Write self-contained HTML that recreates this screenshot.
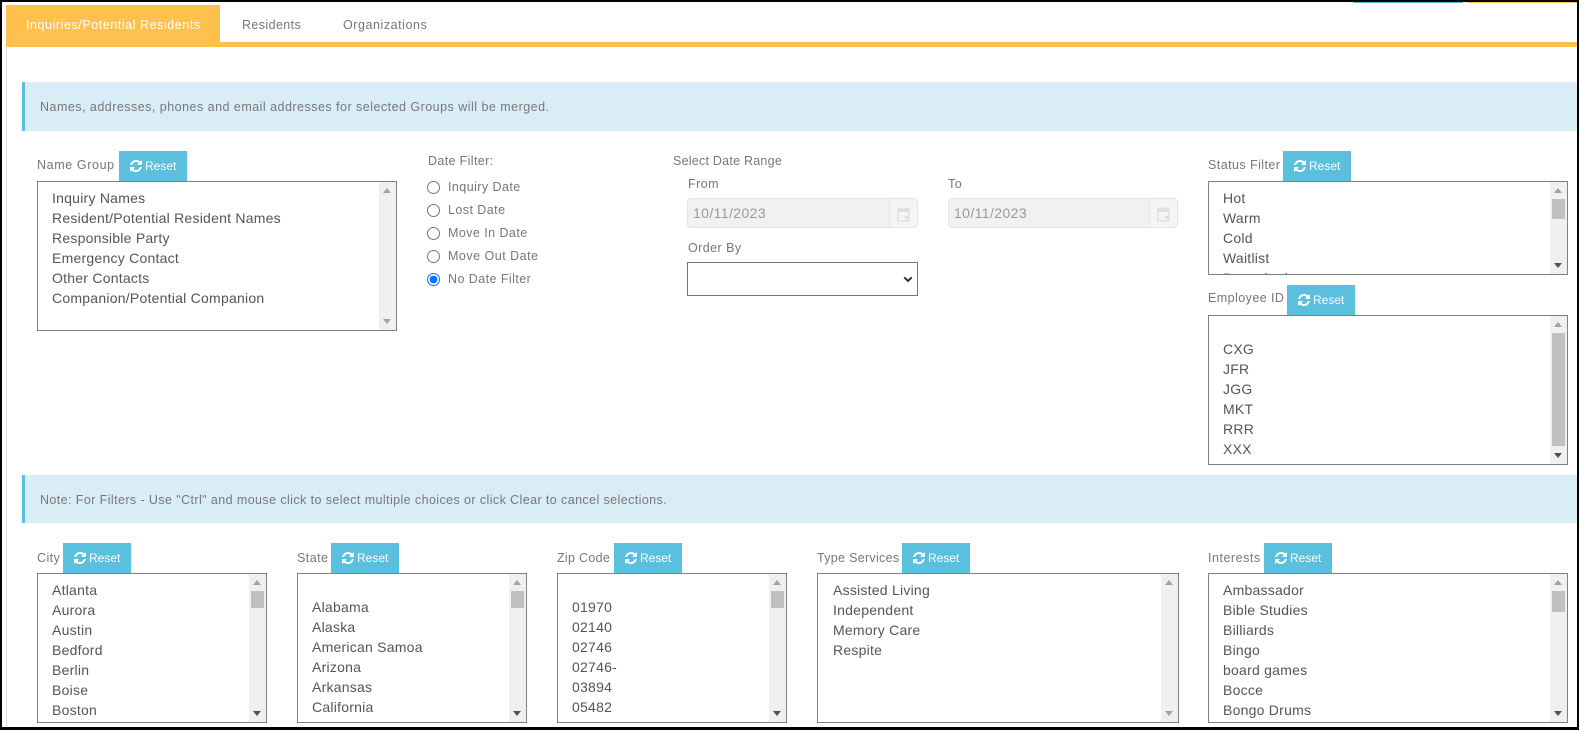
<!DOCTYPE html>
<html lang="en">
<head>
<meta charset="utf-8">
<title>Merge Filters</title>
<style>
html,body{margin:0;padding:0;background:#fff}
body{position:relative;width:1579px;height:730px;overflow:hidden;font-family:"Liberation Sans",Arial,sans-serif;color:#777}
.a{position:absolute;white-space:nowrap}
.k{position:absolute;background:#000}
.t{font-size:12.5px;line-height:16px;letter-spacing:.44px}
.alert{position:absolute;left:22px;width:1555px;box-sizing:border-box;background:#d9edf7;border-left:3px solid #5bc0de;font-size:12.5px;color:#777;padding-left:15px}
.btn{position:absolute;width:68px;height:30px;background:#5bc0de;color:#fff;font-size:12px}
.btn svg{position:absolute;left:10px;top:8px;width:14px;height:14px;fill:#fff}
.btn span{position:absolute;left:26px;top:7px;line-height:16px}
.box{position:absolute;box-sizing:border-box;border:1px solid #808080;background:#fff;overflow:hidden;font-size:14px;letter-spacing:.24px;color:#555;line-height:20px}
.box .l{position:absolute;left:14px;top:6px;white-space:nowrap}
.box .l div{height:20px}
.box .l .b{height:17px}
.tr{position:absolute;right:0;top:0;bottom:0;width:17px;background:#f0f0f0}
.th{position:absolute;left:2px;width:13px;background:#c0c0c0}
.up,.dn{position:absolute;left:4px;width:0;height:0;border-left:4.5px solid transparent;border-right:4.5px solid transparent}
.up{top:6px;border-bottom:5px solid #a3a3a3}
.dn{bottom:6px;border-top:5px solid #505050}
.dn.off{border-top-color:#a3a3a3}
.inp{position:absolute;box-sizing:border-box;height:30px;width:230px;background:#f1f1f1;border:1px solid #e4e4e4;border-radius:4px;font-size:14px;letter-spacing:.4px;line-height:28px;color:#999;padding-left:5px}
.add{position:absolute;right:0;top:0;bottom:0;width:27px;background:#f5f5f5;border-left:1px solid #e4e4e4;border-radius:0 4px 4px 0}
.add svg{position:absolute;left:7px;top:7px;width:13px;height:16px}
input[type=radio]{position:absolute;margin:0;width:13px;height:13px}
select{position:absolute;box-sizing:border-box;background:#fff;border:1px solid #767676;border-radius:0;margin:0;padding:0;appearance:none;-webkit-appearance:none}
</style>
</head>
<body>
<svg width="0" height="0" style="position:absolute"><symbol id="r" viewBox="0 0 1792 1792"><path d="M1639 1056q0 5-1 7-64 268-268 434.5t-478 166.5q-146 0-282.5-55t-243.5-157l-129 129q-19 19-45 19t-45-19-19-45v-448q0-26 19-45t45-19h448q26 0 45 19t19 45-19 45l-137 137q71 66 161 102t187 36q134 0 250-65t186-179q11-17 53-117 8-23 30-23h192q13 0 22.5 9.5t9.5 22.5zm25-800v448q0 26-19 45t-45 19h-448q-26 0-45-19t-19-45 19-45l138-138q-148-137-349-137-134 0-250 65t-186 179q-11 17-53 117-8 23-30 23h-199q-13 0-22.5-9.5t-9.5-22.5v-7q65-268 270-434.5t480-166.5q146 0 284 55.5t245 156.5l130-129q19-19 45-19t45 19 19 45z"/></symbol></svg>

<!-- tabs -->
<div class="a" style="left:6px;top:5px;width:214px;height:37px;background:#ffc14d"></div>
<div class="a" style="left:6px;top:42px;width:1571px;height:5px;background:#ffc14d"></div>
<div class="a t" style="left:26px;top:17px;color:#fff;letter-spacing:.56px">Inquiries/Potential Residents</div>
<div class="a t" style="left:242px;top:17px;letter-spacing:.4px">Residents</div>
<div class="a t" style="left:343px;top:17px;letter-spacing:.55px">Organizations</div>
<div class="a" style="left:6px;top:47px;width:1px;height:680px;background:#ddd"></div>
<div class="a" style="left:1353px;top:2px;width:110px;height:1px;background:#5bc0de"></div>
<div class="a" style="left:1467px;top:2px;width:110px;height:1px;background:#ffc14d"></div>

<!-- alerts -->
<div class="alert" style="top:82px;height:49px;line-height:51px;letter-spacing:.48px">Names, addresses, phones and email addresses for selected Groups will be merged.</div>
<div class="alert" style="top:475px;height:48px;line-height:50px;letter-spacing:.41px">Note: For Filters - Use "Ctrl" and mouse click to select multiple choices or click Clear to cancel selections.</div>

<!-- name group -->
<div class="a t" style="left:37px;top:157px;letter-spacing:.62px">Name Group</div>
<div class="btn" style="left:119px;top:151px"><svg><use href="#r"/></svg><span>Reset</span></div>
<div class="box" style="left:37px;top:181px;width:360px;height:150px"><div class="l"><div>Inquiry Names</div><div>Resident/Potential Resident Names</div><div>Responsible Party</div><div>Emergency Contact</div><div>Other Contacts</div><div>Companion/Potential Companion</div></div><div class="tr"><div class="up"></div><div class="dn off"></div></div></div>

<!-- date filter -->
<div class="a t" style="left:428px;top:153px;letter-spacing:.36px">Date Filter:</div>
<input type="radio" name="d" style="left:427px;top:181px"><div class="a t" style="left:448px;top:179px">Inquiry Date</div>
<input type="radio" name="d" style="left:427px;top:204px"><div class="a t" style="left:448px;top:202px">Lost Date</div>
<input type="radio" name="d" style="left:427px;top:227px"><div class="a t" style="left:448px;top:225px">Move In Date</div>
<input type="radio" name="d" style="left:427px;top:250px"><div class="a t" style="left:448px;top:248px;letter-spacing:.5px">Move Out Date</div>
<input type="radio" name="d" checked style="left:427px;top:273px"><div class="a t" style="left:448px;top:271px">No Date Filter</div>

<!-- date range -->
<div class="a t" style="left:673px;top:153px;letter-spacing:.24px">Select Date Range</div>
<div class="a t" style="left:688px;top:176px">From</div>
<div class="a t" style="left:948px;top:176px">To</div>
<div class="inp" style="left:687px;top:198px;width:231px">10/11/2023<div class="add"><svg viewBox="0 0 13 16"><path d="M1 3h11v12H1z" fill="none" stroke="#ddd" stroke-width="1.2"/><path d="M1 3h11v3H1zM3 1h1.500v2H3zM8.500 1H10v2H8.500zM8 10h3v3H8z" fill="#ddd"/></svg></div></div>
<div class="inp" style="left:948px;top:198px">10/11/2023<div class="add"><svg viewBox="0 0 13 16"><path d="M1 3h11v12H1z" fill="none" stroke="#ddd" stroke-width="1.2"/><path d="M1 3h11v3H1zM3 1h1.500v2H3zM8.500 1H10v2H8.500zM8 10h3v3H8z" fill="#ddd"/></svg></div></div>
<div class="a t" style="left:688px;top:240px">Order By</div>
<select style="left:687px;top:262px;width:231px;height:34px"><option></option></select>
<svg class="a" style="left:903px;top:276px" width="10" height="7" viewBox="0 0 10 7"><path d="M1.200 1.300L5 5l3.800-3.700" fill="none" stroke="#333" stroke-width="2"/></svg>

<!-- status -->
<div class="a t" style="left:1208px;top:157px">Status Filter</div>
<div class="btn" style="left:1283px;top:151px"><svg><use href="#r"/></svg><span>Reset</span></div>
<div class="box" style="left:1208px;top:181px;width:360px;height:94px"><div class="l"><div>Hot</div><div>Warm</div><div>Cold</div><div>Waitlist</div><div>Deposited</div></div><div class="tr"><div class="up"></div><div class="th" style="top:17px;height:20px"></div><div class="dn"></div></div></div>

<!-- employee -->
<div class="a t" style="left:1208px;top:290px">Employee ID</div>
<div class="btn" style="left:1287px;top:285px"><svg><use href="#r"/></svg><span>Reset</span></div>
<div class="box" style="left:1208px;top:315px;width:360px;height:150px"><div class="l"><div class="b"></div><div>CXG</div><div>JFR</div><div>JGG</div><div>MKT</div><div>RRR</div><div>XXX</div></div><div class="tr"><div class="up"></div><div class="th" style="top:17px;height:113px"></div><div class="dn"></div></div></div>

<!-- city -->
<div class="a t" style="left:37px;top:550px">City</div>
<div class="btn" style="left:63px;top:543px"><svg><use href="#r"/></svg><span>Reset</span></div>
<div class="box" style="left:37px;top:573px;width:230px;height:150px"><div class="l"><div>Atlanta</div><div>Aurora</div><div>Austin</div><div>Bedford</div><div>Berlin</div><div>Boise</div><div>Boston</div></div><div class="tr"><div class="up"></div><div class="th" style="top:17px;height:17px"></div><div class="dn"></div></div></div>

<!-- state -->
<div class="a t" style="left:297px;top:550px">State</div>
<div class="btn" style="left:331px;top:543px"><svg><use href="#r"/></svg><span>Reset</span></div>
<div class="box" style="left:297px;top:573px;width:230px;height:150px"><div class="l"><div class="b"></div><div>Alabama</div><div>Alaska</div><div>American Samoa</div><div>Arizona</div><div>Arkansas</div><div>California</div><div>Colorado</div></div><div class="tr"><div class="up"></div><div class="th" style="top:17px;height:17px"></div><div class="dn"></div></div></div>

<!-- zip -->
<div class="a t" style="left:557px;top:550px;letter-spacing:.3px">Zip Code</div>
<div class="btn" style="left:614px;top:543px"><svg><use href="#r"/></svg><span>Reset</span></div>
<div class="box" style="left:557px;top:573px;width:230px;height:150px"><div class="l"><div class="b"></div><div>01970</div><div>02140</div><div>02746</div><div>02746-</div><div>03894</div><div>05482</div></div><div class="tr"><div class="up"></div><div class="th" style="top:17px;height:17px"></div><div class="dn"></div></div></div>

<!-- type services -->
<div class="a t" style="left:817px;top:550px;letter-spacing:.3px">Type Services</div>
<div class="btn" style="left:902px;top:543px"><svg><use href="#r"/></svg><span>Reset</span></div>
<div class="box" style="left:817px;top:573px;width:362px;height:150px"><div class="l" style="left:15px"><div>Assisted Living</div><div>Independent</div><div>Memory Care</div><div>Respite</div></div><div class="tr"><div class="up"></div><div class="dn off"></div></div></div>

<!-- interests -->
<div class="a t" style="left:1208px;top:550px;letter-spacing:.52px">Interests</div>
<div class="btn" style="left:1264px;top:543px"><svg><use href="#r"/></svg><span>Reset</span></div>
<div class="box" style="left:1208px;top:573px;width:360px;height:150px"><div class="l"><div>Ambassador</div><div>Bible Studies</div><div>Billiards</div><div>Bingo</div><div>board games</div><div>Bocce</div><div>Bongo Drums</div></div><div class="tr"><div class="up"></div><div class="th" style="top:17px;height:21px"></div><div class="dn"></div></div></div>

<!-- screenshot frame -->
<div class="k" style="left:0;top:0;width:1579px;height:2px"></div>
<div class="k" style="left:0;top:0;width:2px;height:730px"></div>
<div class="k" style="left:1577px;top:0;width:2px;height:730px"></div>
<div class="k" style="left:0;top:727px;width:1579px;height:3px"></div>
</body>
</html>
